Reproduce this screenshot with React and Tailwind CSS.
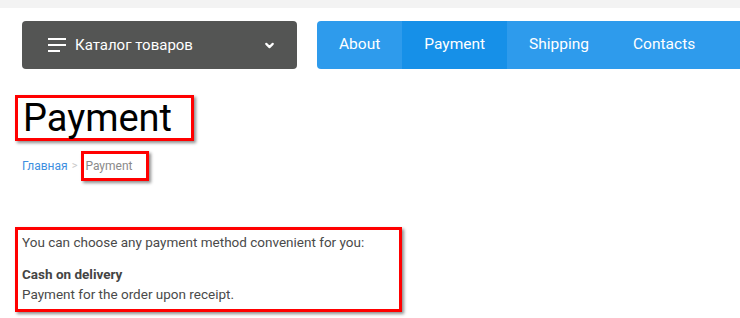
import React from 'react'
import { ChevronDown } from 'lucide-react'

const navItems = [
  { label: 'About', active: false },
  { label: 'Payment', active: true },
  { label: 'Shipping', active: false },
  { label: 'Contacts', active: false },
]

const MarkBox = ({ className = '', children }) => (
  <div className={`inline-block border-[3px] border-[#ff0000] shadow-[2px_2px_3px_rgba(0,0,0,0.45)] ${className}`}>
    {children}
  </div>
)

const App = () => {
  return (
    <div className="min-h-[318px] bg-white overflow-hidden" style={{ fontFamily: 'Roboto, "Noto Sans", sans-serif' }}>
      <div className="h-2 bg-[#f3f3f3]" />

      {/* Header */}
      <div className="flex mt-[13px] pl-[22px] gap-[20px]">
        <button className="w-[275px] h-12 bg-[#545554] rounded-[4px] flex items-center pl-[26px] pr-[21px] text-white">
          <span className="flex flex-col gap-[4px] w-[18px]">
            <span className="h-[2px] w-[18px] bg-white" />
            <span className="h-[2px] w-[18px] bg-white" />
            <span className="h-[2px] w-[12px] bg-white" />
          </span>
          <span className="ml-[9px] text-[15px] flex-1 text-left">Каталог товаров</span>
          <ChevronDown className="w-[13px] h-[13px]" strokeWidth={4} />
        </button>

        <nav className="flex-1 h-12 bg-[#2e9bec] rounded-l-[4px] flex">
          {navItems.map((item) => (
            <a
              key={item.label}
              className={`h-full flex items-center px-[22px] text-[15.5px] text-white ${item.active ? 'bg-[#1690e8]' : ''}`}
            >
              {item.label}
            </a>
          ))}
        </nav>
      </div>

      {/* Content */}
      <div className="px-[15px]">
        <MarkBox className="mt-[26px] pl-[5px] pr-[19px]">
          <h1 className="text-[38px] leading-[40px] text-black">Payment</h1>
        </MarkBox>

        <div className="flex items-center mt-[10px] pl-[7px] text-[12px]">
          <a className="text-[#3d8fe0]">Главная</a>
          <span className="text-[#c8c8c8] mx-[4px] text-[11px]">&gt;</span>
          <MarkBox className="h-[30px] pl-[1px] pr-[14px] leading-[24px] text-[#8a8a8a]">
            Payment
          </MarkBox>
        </div>

        <MarkBox className="mt-[46px] w-[387px] pl-[4px] pt-[2px] pb-[5px] text-[13.5px] leading-[20px] text-[#4a4a4a]">
          <p>You can choose any payment method convenient for you:</p>
          <p className="mt-[12px] font-bold text-[#444]">Cash on delivery</p>
          <p>Payment for the order upon receipt.</p>
        </MarkBox>
      </div>
    </div>
  )
}

export default App
